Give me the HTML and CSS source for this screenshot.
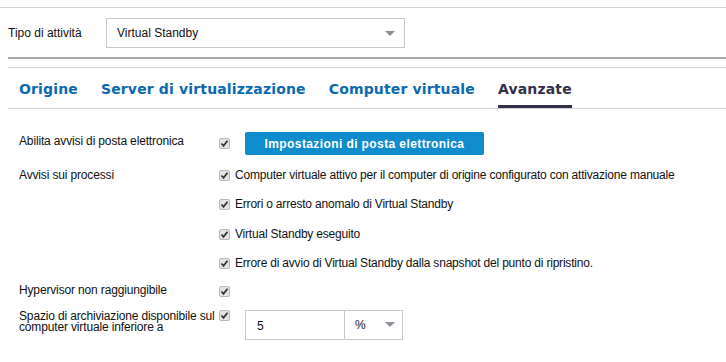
FILE: index.html
```html
<!DOCTYPE html>
<html>
<head>
<meta charset="utf-8">
<link rel="stylesheet" href="styles.css">
</head>
<body>
<div class="page">
  <div class="task-row">
    <span class="task-label">Tipo di attività</span>
    <div class="select task-select">
      <span>Virtual Standby</span>
      <span class="caret"></span>
    </div>
  </div>
  <div class="sep"></div>
  <nav class="tabs">
    <span class="tab">Origine</span>
    <span class="tab">Server di virtualizzazione</span>
    <span class="tab">Computer virtuale</span>
    <span class="tab active">Avanzate</span>
  </nav>
  <div class="form">
    <div class="row r-email">
      <div class="label">Abilita avvisi di posta elettronica</div>
      <span class="cb"></span>
      <button class="btn">Impostazioni di posta elettronica</button>
    </div>
    <div class="row r-jobs">
      <div class="label">Avvisi sui processi</div>
      <div class="opts">
        <div class="opt"><span class="cb"></span><span>Computer virtuale attivo per il computer di origine configurato con attivazione manuale</span></div>
        <div class="opt"><span class="cb"></span><span>Errori o arresto anomalo di Virtual Standby</span></div>
        <div class="opt"><span class="cb"></span><span>Virtual Standby eseguito</span></div>
        <div class="opt"><span class="cb"></span><span>Errore di avvio di Virtual Standby dalla snapshot del punto di ripristino.</span></div>
      </div>
    </div>
    <div class="row r-hyper">
      <div class="label">Hypervisor non raggiungibile</div>
      <span class="cb"></span>
    </div>
    <div class="row r-space">
      <div class="label">Spazio di archiviazione disponibile sul computer virtuale inferiore a</div>
      <span class="cb"></span>
      <div class="inputs">
        <div class="input">5</div>
        <div class="select unit"><span>%</span><span class="caret"></span></div>
      </div>
    </div>
  </div>
</div>
</body>
</html>
```
FILE: styles.css
```css
* { box-sizing: border-box; }
body {
  margin: 0;
  background: #fff;
  font-family: "Liberation Sans", Arial, sans-serif;
  font-size: 12px;
  color: #111;
}
.page {
  margin-top: 7px;
  border-top: 1px solid #d3d3db;
  height: 355px;
  overflow: hidden;
}
.task-row {
  display: flex;
  align-items: center;
  padding: 10px 0 0 8px;
  height: 40px;
}
.task-label {
  width: 98px;
}
.select {
  display: flex;
  align-items: center;
  justify-content: space-between;
  border: 1px solid #c8c8c8;
  background: #fff;
}
.task-select {
  width: 299px;
  height: 30px;
  padding: 0 9px 0 10px;
}
.caret {
  width: 0;
  height: 0;
  border-left: 5px solid transparent;
  border-right: 5px solid transparent;
  border-top: 5px solid #8a8f99;
}
.sep {
  margin: 9px 0 0 8px;
  border-top: 2px solid #a9a9ab;
  height: 11px;
  border-bottom: 1px solid #d3d3db;
}
.tabs {
  display: flex;
  gap: 23px;
  margin-left: 8px;
  padding-left: 11px;
  border-bottom: 1px solid #d3d3db;
  height: 41px;
}
.tab {
  font-family: "DejaVu Sans", sans-serif;
  font-weight: bold;
  font-size: 14px;
  color: #0b69b1;
  letter-spacing: 0.15px;
  padding-top: 13px;
  height: 40px;
  border-bottom: 3px solid transparent;
}
.tab.active {
  color: #33304a;
  border-bottom-color: #33304a;
}
.form {
  padding: 25px 0 0 19px;
}
.row {
  display: flex;
  align-items: flex-start;
}
.label {
  width: 200px;
  letter-spacing: -0.15px;
}
.cb {
  flex: none;
  width: 11px;
  height: 11px;
  border: 1px solid #b8b8b8;
  border-radius: 2px;
  background: #e4e4e4 url("data:image/svg+xml,%3Csvg xmlns='http://www.w3.org/2000/svg' width='9' height='9'%3E%3Cpath d='M1.5 4.5 L3.5 6.8 L7.5 1.8' fill='none' stroke='%23333' stroke-width='1.8'/%3E%3C/svg%3E") center/9px 9px no-repeat;
}
.r-email { height: 34px; }
.r-email .cb { margin-top: 4px; }
.btn {
  margin: -2px 0 0 15px;
  width: 239px;
  height: 23px;
  border: none;
  border-radius: 2px;
  background: #0e8ccc;
  color: #fff;
  font-family: "Liberation Sans", Arial, sans-serif;
  font-weight: bold;
  font-size: 12px;
  letter-spacing: 0.4px;
  white-space: nowrap;
  padding: 0;
}
.opts { display: flex; flex-direction: column; }
.opt {
  display: flex;
  gap: 5px;
  height: 29.4px;
  align-items: flex-start;
  letter-spacing: -0.2px;
}
.opt .cb { margin-top: 2px; }
.r-hyper { height: 27px; margin-top: -3px; }
.r-hyper .cb { margin-top: 3px; }
.r-space .label { line-height: 11px; padding-top: 1px; }
.r-space .cb { margin-top: 0; }
.inputs {
  display: flex;
  margin: 0 0 0 15px;
}
.input {
  width: 100px;
  height: 30px;
  border: 1px solid #c8c8c8;
  padding: 8px 11px;
}
.unit {
  width: 58px;
  height: 30px;
  border-left: none;
  padding: 0 7px 0 10px;
}
```
